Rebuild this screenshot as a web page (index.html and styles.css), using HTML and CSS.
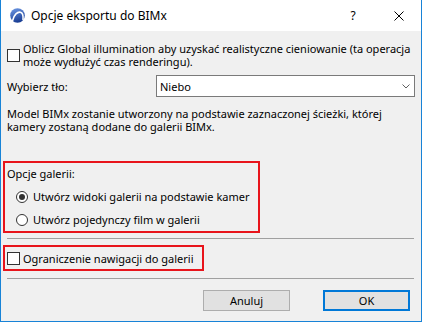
FILE: index.html
```html
<!DOCTYPE html>
<html lang="pl">
<head>
<meta charset="utf-8">
<title>Opcje eksportu do BIMx</title>
<link rel="stylesheet" href="styles.css">
</head>
<body>
<div class="window">
  <div class="titlebar">
    <svg class="app-icon" width="15" height="15" viewBox="0 0 15 15">
      <defs>
        <linearGradient id="g" x1="0" y1="0" x2="0.3" y2="1">
          <stop offset="0" stop-color="#6f9ae6"/>
          <stop offset="1" stop-color="#1b3f95"/>
        </linearGradient>
      </defs>
      <circle cx="7.5" cy="7.5" r="7.3" fill="url(#g)"/>
      <path d="M2.6 12.6 C4 6.5 7.5 3.6 10.4 4.2 C12.6 4.7 13.4 7.6 13 11.6" fill="none" stroke="#fff" stroke-width="1.6" stroke-linecap="round"/>
    </svg>
    <span class="title">Opcje eksportu do BIMx</span>
    <span class="help">?</span>
    <svg class="close" width="10" height="10" viewBox="0 0 10 10">
      <path d="M0.5 0.5 L9.5 9.5 M9.5 0.5 L0.5 9.5" stroke="#000" stroke-width="1"/>
    </svg>
  </div>
  <div class="content">
    <div class="check-row gi">
      <span class="checkbox"></span>
      <span class="check-text">Oblicz Global illumination aby uzyskać realistyczne cieniowanie (ta operacja może wydłużyć czas renderingu).</span>
    </div>
    <div class="bg-row">
      <span class="bg-label">Wybierz tło:</span>
      <div class="select">
        <span class="select-value">Niebo</span>
        <svg class="chevron" width="8" height="5" viewBox="0 0 8 5">
          <path d="M0.5 0.5 L4 4 L7.5 0.5" fill="none" stroke="#606060" stroke-width="1"/>
        </svg>
      </div>
    </div>
    <p class="info">Model BIMx zostanie utworzony na podstawie zaznaczonej ścieżki, której kamery zostaną dodane do galerii BIMx.</p>
    <div class="highlight gallery">
      <div class="group-label">Opcje galerii:</div>
      <div class="radio-row"><span class="radio checked"></span><span>Utwórz widoki galerii na podstawie kamer</span></div>
      <div class="radio-row second"><span class="radio"></span><span>Utwórz pojedynczy film w galerii</span></div>
    </div>
    <div class="separator"></div>
    <div class="highlight nav">
      <span class="checkbox"></span>
      <span>Ograniczenie nawigacji do galerii</span>
    </div>
    <div class="separator"></div>
    <div class="buttons">
      <button class="btn">Anuluj</button>
      <button class="btn default">OK</button>
    </div>
  </div>
</div>
</body>
</html>
```
FILE: styles.css
```css
* { box-sizing: border-box; }
html, body { margin: 0; padding: 0; }
body {
  width: 422px;
  height: 322px;
  overflow: hidden;
  font-family: "Noto Sans", "Open Sans", sans-serif;
  font-size: 11px;
  line-height: 13px;
  color: #000;
}
.window {
  width: 422px;
  height: 322px;
  background: #f0f0f0;
  border-left: 1px solid #1883d7;
  border-right: 1px solid #1883d7;
  border-bottom: 1px solid #1883d7;
  display: flex;
  flex-direction: column;
}
.titlebar {
  height: 31px;
  background: #fff;
  display: flex;
  align-items: center;
  padding-left: 9px;
  flex-shrink: 0;
}
.app-icon { flex-shrink: 0; }
.title { margin-left: 6px; font-size: 12px; flex: 1; }
.help { width: 10px; text-align: center; margin-right: 36px; font-size: 12px; }
.close { margin-right: 17px; }
.content {
  padding: 11px 6px 0 6px;
  display: flex;
  flex-direction: column;
}
.check-row {
  display: flex;
  align-items: center;
}
.checkbox {
  width: 13px;
  height: 13px;
  border: 1px solid #333;
  background: #fff;
  flex-shrink: 0;
}
.check-text { margin-left: 3px; }
.bg-row {
  display: flex;
  align-items: center;
  margin-top: 7px;
}
.bg-label { width: 149px; }
.select {
  width: 259px;
  height: 22px;
  border: 1px solid #7a7a7a;
  background: #fff;
  display: flex;
  align-items: center;
  padding-left: 3px;
  padding-right: 4px;
}
.select-value { flex: 1; }
.info { margin: 10px 0 0 0; }
.highlight {
  border: 2px solid #e8141b;
  margin-left: -4px;
}
.gallery {
  margin-top: 28px;
  width: 257px;
  padding: 4px 2px 5px 2px;
}
.radio-row {
  display: flex;
  align-items: center;
  margin-top: 10px;
  padding-left: 9px;
}
.radio-row.second { margin-top: 10px; }
.radio {
  width: 12px;
  height: 12px;
  border: 1px solid #333;
  border-radius: 50%;
  background: #fff;
  margin-right: 5px;
  flex-shrink: 0;
  position: relative;
}
.radio.checked::after {
  content: "";
  position: absolute;
  left: 2px;
  top: 2px;
  width: 6px;
  height: 6px;
  border-radius: 50%;
  background: #333;
}
.separator {
  height: 1px;
  background: #a0a0a0;
  margin-top: 5px;
  margin-right: 1px;
}
.nav {
  margin-top: 6px;
  width: 201px;
  height: 26px;
  display: flex;
  align-items: center;
  padding-left: 2px;
  gap: 3px;
}
.nav + .separator { margin-top: 7px; }
.buttons {
  display: flex;
  justify-content: flex-end;
  gap: 33px;
  margin-top: 11px;
  padding-right: 5px;
}
.btn {
  width: 87px;
  height: 21px;
  font-family: inherit;
  font-size: 11px;
  background: #e1e1e1;
  border: 1px solid #adadad;
  padding: 0;
  color: #000;
}
.btn.default { border: 2px solid #0078d7; }
```
